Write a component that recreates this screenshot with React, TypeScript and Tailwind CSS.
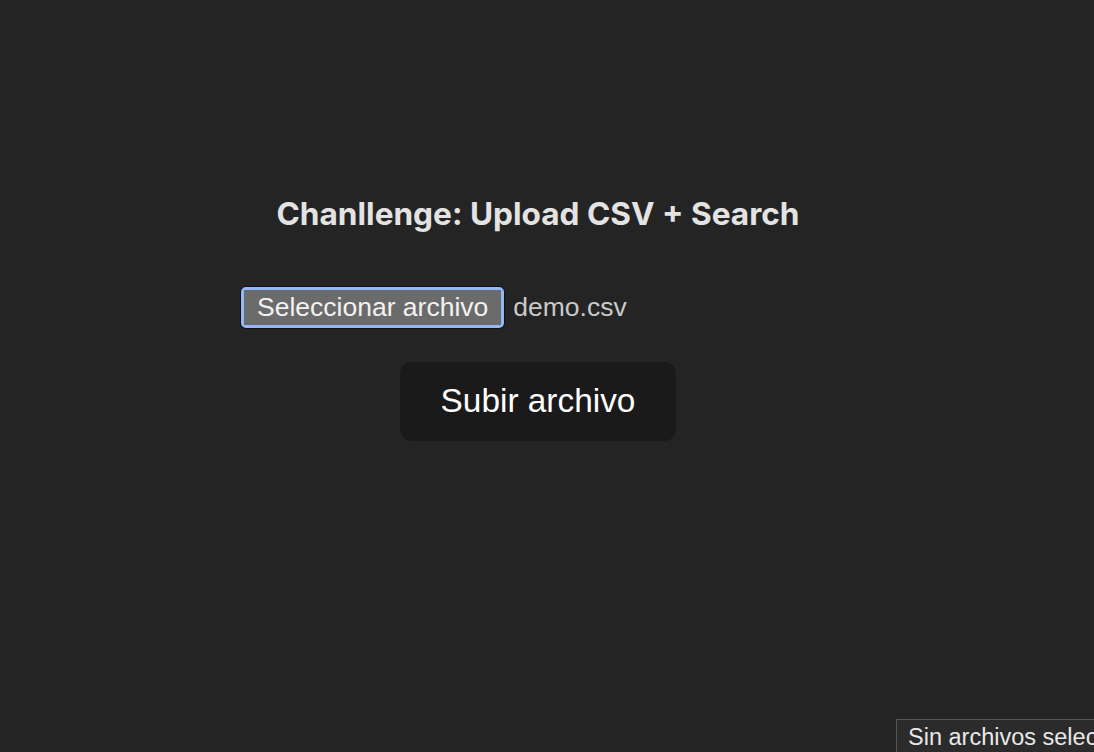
import React from "react";

export default function App() {
  return (
    <div className="relative min-h-screen h-[752px] overflow-hidden bg-[#242424] text-[#e6e6e6] font-['Inter',sans-serif]">
      {/* Upload form */}
      <div className="flex flex-col items-center pt-[193px] pr-[18px]">
        <h1 className="text-[31.6px] font-bold leading-[42px] text-[#e3e3e3]">
          Chanllenge: Upload CSV + Search
        </h1>

        <div className="mt-[51px] flex w-[596px] items-center gap-[8px] font-['Liberation_Sans',Arial,sans-serif]">
          <div className="rounded-[6px] border border-[#111]">
            <div className="rounded-[5px] border-[3px] border-[#93b8f5]">
              <button className="h-[35px] px-[13px] rounded-[2px] bg-[#6b6b6b] text-[26.5px] leading-[35px] text-[#f2f2f2]">
                Seleccionar archivo
              </button>
            </div>
          </div>
          <span className="text-[26.5px] text-[#c9c9c9]">demo.csv</span>
        </div>

        <button className="mt-[33px] h-[79px] w-[276px] rounded-[12px] bg-[#1a1a1a] text-[33.4px] text-white font-['Liberation_Sans',Arial,sans-serif]">
          Subir archivo
        </button>
      </div>

      {/* Native tooltip */}
      <div className="absolute left-[896px] top-[719px] whitespace-nowrap border border-[#555] bg-[#2b2b2b] px-[11px] py-[2px] text-[23.5px] leading-[31px] text-[#e8e8e8] font-['Liberation_Sans',Arial,sans-serif]">
        Sin archivos seleccionados
      </div>
    </div>
  );
}
